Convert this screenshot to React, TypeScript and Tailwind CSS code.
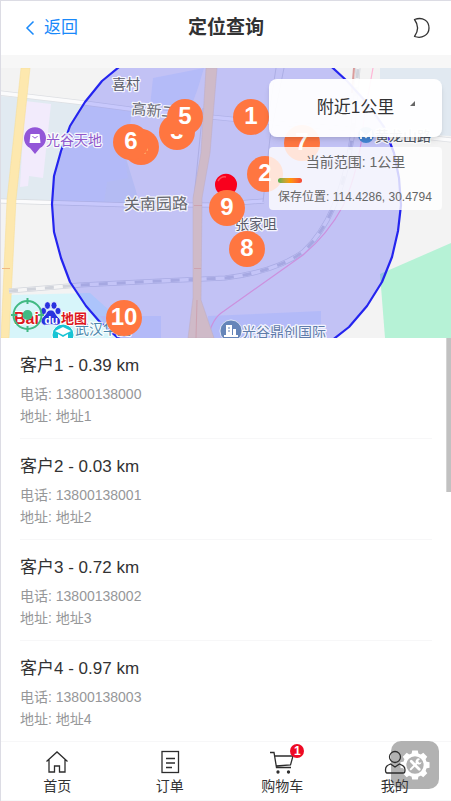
import { useState } from "react";
import type { ReactNode } from "react";

const customers = [
  { id: 1, name: "客户1", distance: "0.39 km", phone: "13800138000", address: "地址1" },
  { id: 2, name: "客户2", distance: "0.03 km", phone: "13800138001", address: "地址2" },
  { id: 3, name: "客户3", distance: "0.72 km", phone: "13800138002", address: "地址3" },
  { id: 4, name: "客户4", distance: "0.97 km", phone: "13800138003", address: "地址4" },
];

// Drawn in this order, so later markers cover earlier ones.
const markers = [
  { n: 1, x: 251, y: 49 },
  { n: 2, x: 265, y: 106 },
  { n: 3, x: 177, y: 64 },
  { n: 4, x: 141, y: 79 },
  { n: 5, x: 185, y: 49 },
  { n: 6, x: 131, y: 74 },
  { n: 7, x: 302, y: 75 },
  { n: 8, x: 247, y: 181 },
  { n: 9, x: 227, y: 140 },
  { n: 10, x: 124, y: 250 },
];

const rangeOutline =
  "M102 13 L130 -10 L170 -31 L226 -41 L282 -31 L322 -10 L347 13 L367 35 L384 59 L394 85 L399 110 L401 137 L398 163 L392 189 L382 214 L367 238 L349 259 L326 277 L290 290 L226 312 L160 290 L118 270 L99 253 L86 238 L70 214 L61 190 L54 164 L52 136 L54 108 L61 83 L70 58 L85 34 Z";

const northSouthRoad = "M206 0 H217 L210 85 L202 130 L201 232 L214 270 H188 L193 230 V130 L201 85Z";

const railway = "M9 223 L80 217 L160 213 L225 210 Q275 204 303 184 Q340 150 352 70 L358 0";

function MapLabel({ x, y, size, fill, rotate = 0, children }: { x: number; y: number; size: number; fill: string; rotate?: number; children: string }) {
  return (
    <text x={x} y={y} fontSize={size} fill={fill} stroke="#fff" strokeOpacity="0.85" strokeWidth="2.5" strokeLinejoin="round" paintOrder="stroke" transform={`rotate(${rotate} ${x} ${y})`}>
      {children}
    </text>
  );
}

function MapCanvas() {
  return (
    <svg viewBox="1 0 450 270" preserveAspectRatio="xMidYMid slice" className="block h-full w-full" role="img" aria-label="地图">
      <rect width="451" height="270" fill="#f3f3f3" />
      {/* land use */}
      <path d="M0 28 L110 38 L140 136 L0 132Z" fill="#e1eaf1" />
      <path d="M25 33 L51 36 L43 110 L29 108 L28 118 L20 119Z" fill="#f2ebfc" />
      <path d="M9 227 L90 225 L140 270 L0 270Z" fill="#d7f5fa" />
      <path d="M380 0 H451 V68 L380 64Z" fill="#e1e9f1" />
      <path d="M451 175 L380 206 L385 270 H451Z" fill="#b6f2d6" />
      <path d="M153 10 L204 0 L198 20 L190 42 L150 38Z" fill="#e2eaf7" />
      <path d="M86 38 L132 43 L125 92 L128 110 L107 114 L104 134 L52 134 L62 80Z" fill="#e0e9f7" />
      <path d="M100 248 H161 V270 H118Z M208 248 L321 243 V270 H208Z" fill="#e0e9f7" />
      {/* minor roads */}
      <path d="M0 25 L85 35 L130 41 L260 54 L340 60 L451 72" stroke="#dddfe3" strokeWidth="5" fill="none" />
      <path d="M0 25 L85 35 L130 41 L260 54 L340 60 L451 72" stroke="#fbfbfc" strokeWidth="3.5" fill="none" />
      <path d="M0 133 L130 137 L210 137 L264 133" stroke="#d7dade" strokeWidth="5" fill="none" />
      <path d="M0 133 L130 137 L210 137 L264 133" stroke="#fbfbfc" strokeWidth="3.5" fill="none" />
      <path d="M284 0 L270 70 L263 134 M276 0 L268 52 M203 40 L194 130 M356 0 L350 75" stroke="#d8dade" strokeWidth="1" fill="none" />
      {/* main roads */}
      <path d="M21 0 H30 L16 132 L9 270 H1 L7 132Z" fill="#fde8ae" stroke="#f6dc94" strokeWidth="0.5" />
      <path d="M2 200.5 H10" stroke="#efba83" />
      {/* railway and metro */}
      <path d={railway} stroke="#d3d6dd" strokeWidth="5" fill="none" />
      <path d={railway} stroke="#f5f5f6" strokeWidth="3.5" fill="none" />
      <path d={railway} stroke="#d0d3db" strokeWidth="3" strokeDasharray="9 9" fill="none" />
      <path d="M208 270 Q212 250 224 243 L303 187 Q328 166 343 138 Q360 100 364 50 L373 0" stroke="#ffb5d6" strokeWidth="1.2" fill="none" />
      <path d="M354 0 L352 25" stroke="#d99c9c" strokeWidth="2" />
      {/* search range */}
      <path d={rangeOutline} fill="#0000ff" fillOpacity="0.2" stroke="#2424ef" strokeWidth="2.2" strokeLinejoin="round" />
      <path d={northSouthRoad} fill="#cfbac8" stroke="#bfadc2" strokeWidth="0.5" />
      <path d="M194 137.5 H202 M194 200.5 H201 M197 232 L196 270" stroke="#cb9dab" strokeWidth="0.8" />
      {/* place names */}
      <g fontFamily='"Noto Sans CJK SC", sans-serif'>
        <MapLabel x={112} y={21} size={14} fill="#5a5c6a">喜村</MapLabel>
        <MapLabel x={131} y={46} size={15} fill="#6a6c76" rotate={5}>高新二路</MapLabel>
        <MapLabel x={46} y={77} size={14} fill="#9058cb">光谷天地</MapLabel>
        <MapLabel x={124} y={142} size={16} fill="#66676e" rotate={-1}>关南园路</MapLabel>
        <MapLabel x={235} y={161} size={14} fill="#5a5c6a">张家咀</MapLabel>
        <MapLabel x={75} y={266} size={14} fill="#4d89ad">武汉华夏</MapLabel>
        <MapLabel x={242} y={269} size={14} fill="#5f7cab">光谷鼎创国际</MapLabel>
        <MapLabel x={375} y={73} size={14} fill="#4c5360">黄龙山路</MapLabel>
      </g>
      {/* place icons */}
      <path d="M35 86 L30 80 A11 11 0 1 1 40 80Z" fill="#9256d8" />
      <path d="M30.500 66 h9 l1 9 h-11Z" fill="#fff" />
      <path d="M32.500 68 q2.500 4 5 0" stroke="#9256d8" fill="none" />
      <circle cx="63" cy="267" r="11" fill="#18c4d4" stroke="#fff" />
      <path d="M55 263 L63 259 L71 263 L63 267Z M58 266 V270 H68 V266 L63 269Z" fill="#fff" />
      <circle cx="231" cy="263" r="11" fill="#6585b9" stroke="#fff" strokeWidth="0.7" />
      <path d="M226 257 H232 V268 H226Z M233 261 H236 V268 H233Z M224 267 H238 V269 H224Z" fill="#fff" />
      <path d="M228 260 H230 M228 263 H230" stroke="#6585b9" />
      <circle cx="366" cy="67" r="8" fill="#4385d3" />
      <path d="M361 71 V64 L366 69 L371 64 V71" stroke="#fff" strokeWidth="2" fill="none" />
      {/* current position */}
      <ellipse cx="234" cy="130" rx="7" ry="5" fill="#555" opacity="0.3" />
      <path d="M226 137 L220 126 A11 11 0 1 1 232 126Z" fill="#f9001d" />
      <path d="M218 113 q3 -5 8 -4" stroke="#ff4b55" strokeWidth="1.500" fill="none" />
      {markers.map((m) => (
        <g key={m.n}>
          <circle cx={m.x} cy={m.y} r="18" fill="#ff7640" />
          <text x={m.x} y={m.y + 7} textAnchor="middle" fontSize="24" fontWeight="700" fill="#fff" fontFamily='"Liberation Sans", Arial, sans-serif'>
            {m.n}
          </text>
        </g>
      ))}
      {/* map provider mark */}
      <g fontWeight="700" stroke="#fff" strokeWidth="2" paintOrder="stroke" strokeLinejoin="round">
        <text x="14" y="256" fontSize="16" fill="#dd1720" fontFamily='"Liberation Sans", Arial, sans-serif'>Bai</text>
        <text x="61" y="255" fontSize="13" fill="#dd1720" fontFamily='"Noto Sans CJK SC", sans-serif'>地图</text>
      </g>
      <g fill="#2932df" stroke="#fff" strokeWidth="0.7">
        <path d="M51 242 C46 242 47 246 43 249 C39 253 42 258 46 257 Q51 256 56 257 C61 258 62 252 58 249 C55 246 55 242 51 242Z" />
        <ellipse cx="43.500" cy="243" rx="3" ry="3.600" />
        <ellipse cx="47.500" cy="237.500" rx="3" ry="3.800" />
        <ellipse cx="54" cy="237.500" rx="3" ry="3.800" />
        <ellipse cx="58" cy="243" rx="3" ry="3.600" />
      </g>
      <text x="44.500" y="256" fontSize="11" fontWeight="700" fill="#fff" fontFamily='"Liberation Sans", Arial, sans-serif'>du</text>
      {/* locate control */}
      <g stroke="#42b983" fill="none" strokeWidth="2">
        <circle cx="27.500" cy="247" r="14" />
        <path d="M27.500 230 V236 M27.500 258 V264 M11 247 H17 M38 247 H44" />
        <circle cx="27.500" cy="247" r="4" fill="#42b983" />
      </g>
    </svg>
  );
}

function TabIcon({ children }: { children: ReactNode }) {
  return (
    <svg viewBox="0 0 26 26" className="h-[26px] w-[26px]" fill="none" stroke="#2d2d2d" strokeWidth="1.300" aria-hidden="true">
      {children}
    </svg>
  );
}

const tabs = [
  {
    label: "首页",
    icon: (
      <TabIcon>
        <path d="M2.500 12.500 L13 3 L23.500 12.500 M5 10.500 V23 H10.500 V17 H15.500 V23 H21 V10.500" />
      </TabIcon>
    ),
  },
  {
    label: "订单",
    icon: (
      <TabIcon>
        <rect x="5" y="2.500" width="16.500" height="21" />
        <path d="M9 9.500 H18 M9 14 H18 M9 18.500 H15" />
      </TabIcon>
    ),
  },
  {
    label: "购物车",
    badge: "1",
    icon: (
      <TabIcon>
        <path d="M1 3.500 H5 L7.500 18.500 H22 M5.500 7 H24 L21.500 16 L7 17" />
        <circle cx="9" cy="23" r="1" fill="#2d2d2d" />
        <circle cx="19.500" cy="23" r="1" fill="#2d2d2d" />
      </TabIcon>
    ),
  },
  {
    label: "我的",
    icon: (
      <TabIcon>
        <circle cx="13" cy="8" r="5.500" />
        <path d="M8.500 15 C5 16.500 3.500 17.500 3.500 21 Q3.500 24 5 24 H21.500 Q23 24 23 21 C23 17.500 21 16.500 17.500 15 L13 18Z" />
      </TabIcon>
    ),
  },
];

const gearTeeth = [0, 45, 90, 135, 180, 225, 270, 315];

export default function App() {
  const [range, setRange] = useState("1");
  return (
    <div className='flex h-screen flex-col border-t border-l border-[#dcdce4] bg-[#f7f7f7] font-["Liberation_Sans",Arial,"Noto_Sans_CJK_SC",sans-serif] text-[#323233]'>
      <header className="grid h-[54px] shrink-0 grid-cols-3 items-center bg-white px-5">
        <button type="button" className="flex items-center gap-[7px] justify-self-start text-[17px] leading-6 text-[#1989fa]">
          <svg viewBox="0 0 16 16" className="h-4 w-4" fill="none" stroke="currentColor" strokeWidth="1.500" aria-hidden="true">
            <path d="M12.500 1.500 L6 8 L12.500 14.500" />
          </svg>
          返回
        </button>
        <h1 className="text-center text-[19px] leading-6 font-bold">定位查询</h1>
        <button type="button" aria-label="夜间模式" className="justify-self-end">
          <svg viewBox="0 0 20 22" className="h-[22px] w-5" fill="none" stroke="#333" strokeWidth="1.300" aria-hidden="true">
            <path d="M3.500 2.500 C12 -.5 18 4 18 11 C18 18 11 22 3.500 19.500 C7.500 14 7.500 8 3.500 2.500Z" strokeLinejoin="round" />
          </svg>
        </button>
      </header>

      <section className="relative mt-[13px] h-[270px] shrink-0 overflow-hidden">
        <MapCanvas />
        <div className="absolute top-[11px] right-[9px] flex w-[173px] flex-col gap-[10px]">
          <div className="relative rounded-lg bg-white/95 shadow-md">
            <select
              aria-label="附近范围"
              value={range}
              onChange={(e) => setRange(e.target.value)}
              className="block h-[58px] w-full cursor-pointer appearance-none bg-transparent text-center text-[17px] [text-align-last:center]"
            >
              <option value="1">附近1公里</option>
              <option value="3">附近3公里</option>
              <option value="5">附近5公里</option>
            </select>
            <svg viewBox="0 0 5 5" className="pointer-events-none absolute top-[22px] right-[27px] h-[5px] w-[5px]" aria-hidden="true">
              <path d="M5 0 V5 H0Z" fill="#666" />
            </svg>
          </div>
          <div className="flex h-[63px] flex-col rounded bg-white/80 px-[9px] pt-1 text-[#666]">
            <p className="text-center text-sm leading-[22px]">当前范围: {range}公里</p>
            <div className="mt-[5px] h-[5px] w-6 rounded-full bg-linear-to-r from-[#4caf50] via-[#ff9800] to-[#f44336]" />
            <p className="mt-[5px] text-xs leading-[18px] whitespace-nowrap">保存位置: 114.4286, 30.4794</p>
          </div>
        </div>
      </section>

      <main className="relative min-h-0 flex-1 overflow-hidden bg-white">
        <ul className="px-[19px]">
          {customers.map((c) => (
            <li key={c.id} className="border-b border-[#f7f7f8] pt-4 pb-[11px]">
              <h2 className="text-[17px] leading-6">
                {c.name} - {c.distance}
              </h2>
              <div className="mt-[5px] text-sm leading-[22px] text-[#969799]">
                <p>电话: {c.phone}</p>
                <p>地址: {c.address}</p>
              </div>
            </li>
          ))}
        </ul>
        <div className="absolute top-0 right-0 h-[154px] w-[5px] border-l border-[#d4d4d4] bg-[#c1c1c1]" />
      </main>

      <nav className="relative grid h-[60px] shrink-0 grid-cols-4 border-y border-[#f7f7f8] bg-white">
        {tabs.map((t) => (
          <a key={t.label} href="#" className="flex flex-col items-center pt-[7px] text-sm leading-5">
            <span className="relative z-10">
              {t.icon}
              {t.badge && (
                <span className="absolute -top-[5px] -right-[9px] flex h-[14px] w-[14px] items-center justify-center rounded-full bg-[#ee0a24] text-xs leading-none font-bold text-white">
                  {t.badge}
                </span>
              )}
            </span>
            <span className="relative z-10 mt-px">{t.label}</span>
          </a>
        ))}
        <button type="button" aria-label="设置" className="absolute -top-px right-3 flex h-12 w-12 items-center justify-center rounded-[10px] bg-[#b2b2b2]">
          <svg viewBox="0 0 32 32" className="h-[30px] w-[30px]" aria-hidden="true">
            <g fill="#fff">
              {gearTeeth.map((a) => (
                <path key={a} d="M12 6 L13 0.500 H19 L20 6Z" transform={`rotate(${a} 16 16)`} />
              ))}
            </g>
            <circle cx="16" cy="16" r="11" fill="#b2b2b2" stroke="#fff" strokeWidth="3.500" />
            <path d="M12 12 L20.500 20.500" stroke="#fff" strokeWidth="3" strokeLinecap="round" />
            <path d="M19 13 L11.500 20.500" stroke="#fff" strokeWidth="2" strokeLinecap="round" />
            <path d="M21.500 9.500 A3.200 3.200 0 1 0 23 13 L20.500 13.500 L19 12Z" fill="#fff" />
          </svg>
        </button>
      </nav>
    </div>
  );
}
